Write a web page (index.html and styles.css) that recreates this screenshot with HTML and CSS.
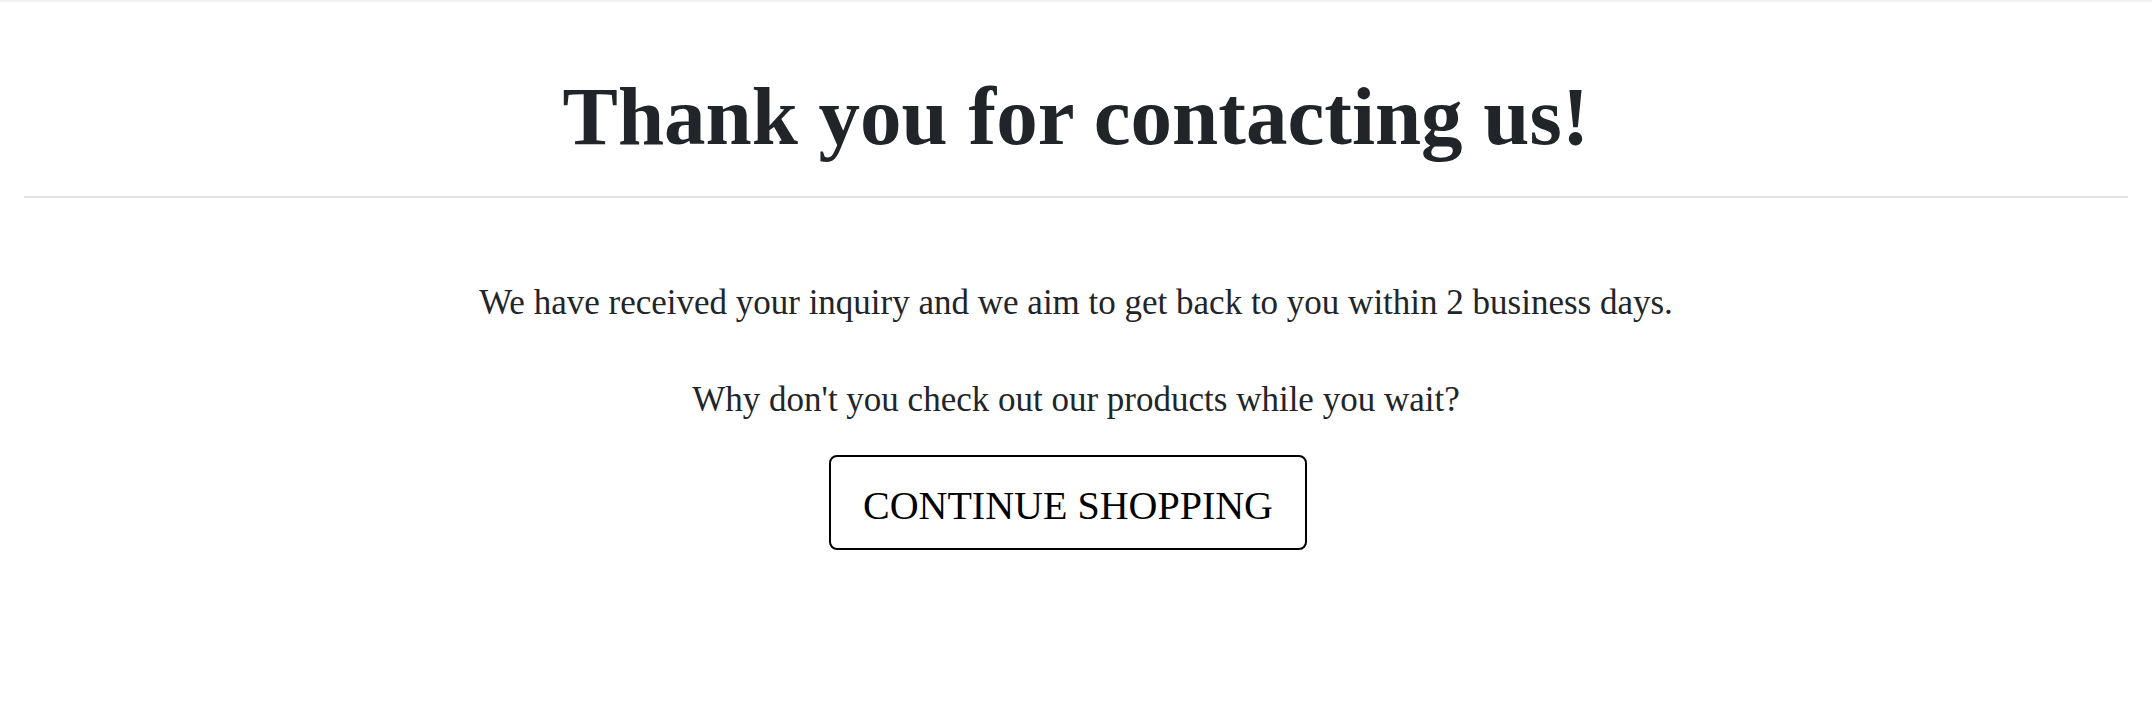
FILE: index.html
```html
<!DOCTYPE html>
<html lang="en">
<head>
<meta charset="utf-8">
<title>Thank you</title>
<link rel="stylesheet" href="styles.css">
</head>
<body>
<div class="topshade"></div>
<main class="page">
  <header class="title-block">
    <h1 class="title">Thank you for contacting us!</h1>
  </header>
  <hr class="rule">
  <section class="message">
    <p class="msg msg-first">We have received your inquiry and we aim to get back to you within 2 business days.</p>
    <p class="msg msg-second">Why don't you check out our products while you wait?</p>
    <a class="btn-continue" href="#">CONTINUE SHOPPING</a>
  </section>
</main>
</body>
</html>
```

FILE: styles.css
```css
html, body {
  margin: 0;
  padding: 0;
  background: #ffffff;
}

body {
  font-family: "Liberation Serif", "Times New Roman", serif;
  color: #212529;
}

.topshade {
  height: 3px;
  background: linear-gradient(#ececec, #ffffff);
}

.page {
  padding: 0 24px;
}

.title-block {
  padding-top: 66px;
  text-align: center;
}

.title {
  margin: 0;
  font-family: "Liberation Serif", serif;
  font-weight: 700;
  font-size: 83px;
  line-height: 94px;
  color: #212529;
}

.rule {
  margin: 33px 0 0;
  border: 0;
  height: 2px;
  background: #e2e2e2;
}

.message {
  display: flex;
  flex-direction: column;
  align-items: center;
  padding-top: 81px;
}

.msg {
  margin: 0;
  font-size: 35px;
  line-height: 48px;
  color: #212529;
}

.msg-second {
  margin-top: 49px;
}

.btn-continue {
  margin: 31px 16px 0 0;
  display: inline-block;
  padding: 20px 32px 14px;
  border: 2px solid #000;
  border-radius: 8px;
  font-family: "Liberation Serif", serif;
  font-size: 40px;
  line-height: 57px;
  color: #000;
  text-decoration: none;
}
```
